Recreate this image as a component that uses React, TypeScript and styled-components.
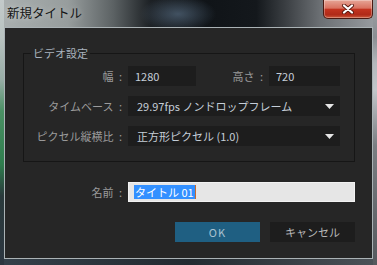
import React from "react";
import styled, { createGlobalStyle } from "styled-components";

const Global = createGlobalStyle`
  html, body { margin: 0; padding: 0; background: #1b1f22; }
  body { font-family: "Noto Sans CJK JP", "Noto Sans", sans-serif; }
  * { box-sizing: border-box; }
`;

const Window = styled.div`
  width: 377px;
  height: 265px;
  display: flex;
  flex-direction: column;
  padding: 0 4px 6px 4px;
  background:
    linear-gradient(180deg, #c3caca 0%, #b9c3c1 14%, #98ada6 30%, #4a9064 42%, #2f7d4e 62%, #2a3a3c 74%, #2c3640 100%) left top / 4px 100% no-repeat,
    linear-gradient(180deg, #9ea2a6 0%, #8a8e92 14%, #b4b8bc 24%, #c2c6ca 34%, #7a7e82 55%, #55595d 100%) right top / 4px 100% no-repeat,
    linear-gradient(90deg, #34404a 0%, #232a30 50%, #4c5258 100%) left bottom / 100% 6px no-repeat,
    radial-gradient(ellipse 38px 18px at 178px 14px, rgba(80, 100, 120, 0.75), rgba(80, 100, 120, 0) 100%),
    linear-gradient(90deg, #aab0b0 0%, #979d9d 18%, #5c6264 30%, #1c2024 40%, #101418 55%, #14181c 68%, #3c4044 76%, #6c7074 85%, #9a9ea2 100%);
`;

const TitleBar = styled.div`
  height: 27px;
  display: flex;
  align-items: flex-start;
  justify-content: space-between;
`;

const Title = styled.div`
  padding: 5px 0 0 3px;
  font-size: 12.5px;
  line-height: 16px;
  color: #141414;
  text-shadow: 0 0 6px rgba(255, 255, 255, 0.45);
`;

const CloseButton = styled.div`
  width: 50px;
  height: 19px;
  display: flex;
  align-items: center;
  justify-content: center;
  border: 1px solid #4a1a12;
  border-top: none;
  border-radius: 0 0 5px 5px;
  background: linear-gradient(180deg, #e6a596 0%, #d97260 45%, #c2331f 52%, #b02a18 82%, #cc5a3c 100%);
  box-shadow: inset 0 0 0 1px rgba(255, 255, 255, 0.3);
`;

const Panel = styled.div`
  flex: 1;
  display: flex;
  flex-direction: column;
  border: 1px solid rgba(215, 225, 230, 0.75);
  background: #262626;
  padding: 19px 17px 0 18px;
`;

const Group = styled.fieldset`
  margin: 0;
  padding: 6px 14px 15px 0;
  border: 1px solid #161616;
  min-width: 0;
`;

const Legend = styled.legend`
  margin-left: 7px;
  padding: 0 2px;
  font-size: 11px;
  line-height: 13px;
  color: #a9b3bd;
`;

const FormGrid = styled.div<{ $indent?: number }>`
  display: grid;
  grid-template-columns: 98px 1fr;
  column-gap: 6px;
  row-gap: 10px;
  padding-left: ${(p) => p.$indent ?? 0}px;
`;

const Label = styled.div<{ $flex?: boolean }>`
  font-size: 11px;
  line-height: 20px;
  color: #9b9b9b;
  text-align: right;
  white-space: pre;
  ${(p) => (p.$flex ? "flex: 1; padding-right: 6px;" : "")}
`;

const Line = styled.div`
  display: flex;
  align-items: center;
`;

const Field = styled.div<{ $w?: number }>`
  height: 20px;
  ${(p) => (p.$w ? `width: ${p.$w}px;` : "flex: 1;")}
  background: #1d1d1d;
  color: #c5ced8;
  font-size: 11px;
  line-height: 20px;
  padding: 0 7px;
  white-space: nowrap;
`;

const Select = styled.div`
  height: 20px;
  background: #1d1d1d;
  color: #c5ced8;
  font-size: 11px;
  line-height: 20px;
  padding: 0 6px 0 9px;
  display: flex;
  align-items: center;
  justify-content: space-between;
  white-space: nowrap;
`;

const NameRow = styled(FormGrid)`
  margin-top: 20px;
`;

const NameInput = styled.div`
  height: 20px;
  background: #e6e6e6;
  border: 1px solid #f2f2f2;
  padding: 0 5px;
  display: flex;
  align-items: center;
`;

const Selection = styled.span`
  background: #3390ff;
  color: #ffffff;
  font-size: 11px;
  line-height: 14px;
  padding: 0 1px;
  white-space: nowrap;
`;

const Caret = styled.span`
  width: 1px;
  height: 14px;
  background: #c86a30;
`;

const Buttons = styled.div`
  margin-top: 20px;
  display: flex;
  justify-content: flex-end;
  gap: 10px;
`;

const Button = styled.div<{ $primary?: boolean }>`
  width: 85px;
  height: 20px;
  display: flex;
  align-items: center;
  justify-content: center;
  font-size: 11px;
  letter-spacing: ${(p) => (p.$primary ? "1px" : "0")};
  background: ${(p) => (p.$primary ? "#1f5f82" : "#1d1d1d")};
  color: ${(p) => (p.$primary ? "#a9c1d1" : "#b8b8b8")};
`;

const Arrow = () => (
  <svg width="9" height="5" viewBox="0 0 9 5">
    <polygon points="0,0 9,0 4.5,5" fill="#e6e6e6" />
  </svg>
);

const CloseIcon = () => (
  <svg width="14" height="10" viewBox="0 0 14 10">
    <path d="M3 1.5 L11 8.5 M11 1.5 L3 8.5" stroke="#5a1a10" strokeWidth="4" strokeLinecap="round" />
    <path d="M3 1.5 L11 8.5 M11 1.5 L3 8.5" stroke="#ffffff" strokeWidth="2.2" strokeLinecap="round" />
  </svg>
);

export default function App() {
  return (
    <>
      <Global />
      <Window>
        <TitleBar>
          <Title>新規タイトル</Title>
          <CloseButton>
            <CloseIcon />
          </CloseButton>
        </TitleBar>
        <Panel>
          <Group>
            <Legend>ビデオ設定</Legend>
            <FormGrid>
              <Label>{"幅\u2002:"}</Label>
              <Line>
                <Field $w={68}>1280</Field>
                <Label $flex>{"高さ\u2002:"}</Label>
                <Field $w={71}>720</Field>
              </Line>
              <Label>{"タイムベース\u2002:"}</Label>
              <Select>
                <span>29.97fps ノンドロップフレーム</span>
                <Arrow />
              </Select>
              <Label>{"ピクセル縦横比\u2002:"}</Label>
              <Select>
                <span>正方形ピクセル (1.0)</span>
                <Arrow />
              </Select>
            </FormGrid>
          </Group>
          <NameRow $indent={1}>
            <Label>{"名前\u2002:"}</Label>
            <NameInput>
              <Selection>タイトル 01</Selection>
              <Caret />
            </NameInput>
          </NameRow>
          <Buttons>
            <Button $primary>OK</Button>
            <Button>キャンセル</Button>
          </Buttons>
        </Panel>
      </Window>
    </>
  );
}
